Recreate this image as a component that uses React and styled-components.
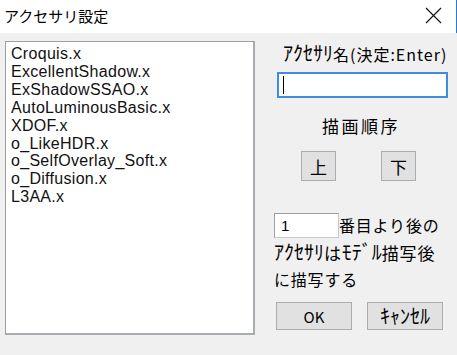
import React from 'react';
import styled, { createGlobalStyle } from 'styled-components';

const ITEMS = [
    'Croquis.x',
    'ExcellentShadow.x',
    'ExShadowSSAO.x',
    'AutoLuminousBasic.x',
    'XDOF.x',
    'o_LikeHDR.x',
    'o_SelfOverlay_Soft.x',
    'o_Diffusion.x',
    'L3AA.x',
];

const JP = `"Noto Sans CJK JP", "Liberation Sans", sans-serif`;

const GlobalStyle = createGlobalStyle`
    html, body {
        margin: 0;
        padding: 0;
        background: #f0f0f0;
    }
    body {
        width: 457px;
        height: 355px;
        overflow: hidden;
        font-family: ${JP};
    }
`;

const Window = styled.div`
    width: 457px;
    height: 355px;
    display: flex;
    flex-direction: column;
    background: #f0f0f0;
`;

const TitleBar = styled.div`
    height: 33px;
    flex: none;
    display: flex;
    align-items: center;
    justify-content: space-between;
    background: #ffffff;
    border-right: 1px solid #1a7fd6;
    box-sizing: border-box;
    padding: 0 14px 0 4px;
`;

const TitleText = styled.div`
    font-family: ${JP};
    font-size: 15px;
    color: #000;
    line-height: 1;
    margin-top: -2px;
`;

const CloseIcon = styled.svg`
    width: 17px;
    height: 17px;
    margin-top: -3px;
`;

const Body = styled.div`
    flex: 1;
    display: flex;
    padding: 8px 0 0 5px;
`;

const ListBox = styled.div`
    width: 250px;
    height: 294px;
    box-sizing: border-box;
    background: #fff;
    border: 1px solid #a5a7ad;
    border-right-width: 2px;
    border-bottom-width: 2px;
    border-color: #a0a0a0 #a9abb2 #a9abb2 #a0a0a0;
    padding: 3px 0 0 5px;
`;

const ListItem = styled.div`
    font-family: "Liberation Sans", Arial, sans-serif;
    font-size: 16px;
    letter-spacing: 0.3px;
    line-height: 17.9px;
    color: #111;
    white-space: nowrap;
`;

const Side = styled.div`
    flex: 1;
    display: flex;
    flex-direction: column;
    padding-left: 19px;
`;

const Label = styled.div`
    font-family: ${JP};
    font-size: ${(p) => p.size || 15}px;
    letter-spacing: ${(p) => p.spacing || 0}px;
    line-height: ${(p) => p.lh || 20}px;
    color: #000;
    white-space: nowrap;
    margin-left: ${(p) => p.ml || 0}px;
    margin-top: ${(p) => p.mt || 0}px;
`;

// half-width katakana: Noto draws them small, so enlarge them to the dialog's look
const Kana = styled.span`
    font-size: 20px;
    letter-spacing: 0;
`;

const NameInput = styled.div`
    width: 171px;
    height: 26px;
    box-sizing: border-box;
    border: 2px solid #3d8ee0;
    background: #fff;
    margin: 6px 0 0 3px;
    display: flex;
    align-items: center;
    padding-left: 4px;
`;

const Caret = styled.div`
    width: 1px;
    height: 18px;
    background: #000;
`;

const OrderButtons = styled.div`
    display: flex;
    gap: 45px;
    margin: 13px 0 0 27px;
`;

const Button = styled.div`
    width: ${(p) => p.w}px;
    height: ${(p) => p.h}px;
    box-sizing: border-box;
    background: #e1e1e1;
    border: 1px solid #adadad;
    display: flex;
    align-items: center;
    justify-content: center;
    font-family: ${JP};
    font-size: ${(p) => p.fs || 15}px;
    line-height: 1;
    color: #000;
`;

const IndexRow = styled.div`
    display: flex;
    align-items: center;
    margin-top: 32px;
`;

const IndexInput = styled.div`
    width: 65px;
    height: 25px;
    box-sizing: border-box;
    background: #fff;
    border: 1px solid #a0a0a0;
    border-right-color: #c8c8c8;
    border-bottom-color: #c8c8c8;
    font-family: "Liberation Sans", Arial, sans-serif;
    font-size: 15px;
    line-height: 23px;
    padding-left: 6px;
`;

const Actions = styled.div`
    display: flex;
    gap: 15px;
    margin: 9px 0 0 2px;
`;

export default function App() {
    return (
        <>
            <GlobalStyle />
            <Window>
                <TitleBar>
                    <TitleText>アクセサリ設定</TitleText>
                    <CloseIcon viewBox="0 0 17 17">
                        <path d="M1 1 L16 16 M16 1 L1 16" stroke="#111" strokeWidth="1.1" fill="none" />
                    </CloseIcon>
                </TitleBar>
                <Body>
                    <ListBox>
                        {ITEMS.map((item) => (
                            <ListItem key={item}>{item}</ListItem>
                        ))}
                    </ListBox>
                    <Side>
                        <Label size={16} spacing={1} ml={9} lh={24}>
                            <Kana>ｱｸｾｻﾘ</Kana>名(決定:Enter)
                        </Label>
                        <NameInput>
                            <Caret />
                        </NameInput>
                        <Label size={17} lh={24} spacing={2.5} ml={48} mt={16}>描画順序</Label>
                        <OrderButtons>
                            <Button w={35} h={30} fs={17}>上</Button>
                            <Button w={35} h={30} fs={17}>下</Button>
                        </OrderButtons>
                        <IndexRow>
                            <IndexInput>1</IndexInput>
                            <Label size={16} lh={25} spacing={0.8}>番目より後の</Label>
                        </IndexRow>
                        <Label size={17} lh={27} spacing={0.8}>
                            <Kana>ｱｸｾｻﾘ</Kana>は<Kana>ﾓﾃﾞﾙ</Kana>描写後
                        </Label>
                        <Label size={16} lh={27} spacing={0.8}>に描写する</Label>
                        <Actions>
                            <Button w={76} h={28}>OK</Button>
                            <Button w={76} h={28}>
                                <Kana>ｷｬﾝｾﾙ</Kana>
                            </Button>
                        </Actions>
                    </Side>
                </Body>
            </Window>
        </>
    );
}
